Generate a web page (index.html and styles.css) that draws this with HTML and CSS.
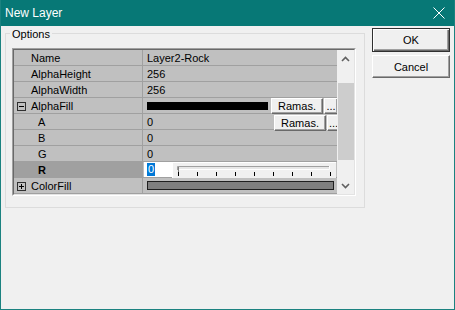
FILE: index.html
```html
<!DOCTYPE html>
<html lang="en">
<head>
  <meta charset="UTF-8">
  <title>New Layer</title>
  <link rel="stylesheet" href="styles.css">
</head>
<body>
  <div class="window">
    <!-- Barra de título -->
    <div class="titlebar">
      <span class="title">New Layer</span>
      <svg class="close" width="12" height="12" viewBox="0 0 12 12">
        <path d="M0.5 0.5L11.5 11.5M11.5 0.5L0.5 11.5" stroke="#fff" stroke-width="1" fill="none"/>
      </svg>
    </div>

    <div class="content">
      <!-- Grupo de opções -->
      <div class="group">
        <div class="group-title">Options</div>
        <div class="grid">
          <div class="grid-inner">
            <div class="props">
              <div class="row">
                <div class="name">Name</div>
                <div class="value">Layer2-Rock</div>
              </div>
              <div class="row">
                <div class="name">AlphaHeight</div>
                <div class="value">256</div>
              </div>
              <div class="row">
                <div class="name">AlphaWidth</div>
                <div class="value">256</div>
              </div>
              <div class="row">
                <div class="name exp"><span class="expander minus"></span>AlphaFill</div>
                <div class="value">
                  <span class="swatch"></span>
                  <button class="mini ramas">Ramas.</button>
                  <button class="mini dots">...</button>
                </div>
              </div>
              <div class="row">
                <div class="name sub">A</div>
                <div class="value">
                  <span class="val-text">0</span>
                  <button class="mini ramas low">Ramas.</button>
                  <button class="mini dots low">...</button>
                </div>
              </div>
              <div class="row">
                <div class="name sub">B</div>
                <div class="value">0</div>
              </div>
              <div class="row">
                <div class="name sub">G</div>
                <div class="value">0</div>
              </div>
              <div class="row selected">
                <div class="name sub"><b>R</b></div>
                <div class="value editing">
                  <span class="edit"><span class="sel">0</span></span>
                  <svg class="slider" width="164" height="16" viewBox="0 0 164 16">
                    <rect x="0" y="0" width="164" height="16" fill="#f0f0f0"/>
                    <path d="M0.5 0V16M0 0.5H164" stroke="#fff"/>
                    <rect x="5" y="4" width="153" height="4" fill="#e7e7e7"/>
                    <path d="M5.5 8V4.5H158" stroke="#a0a0a0" fill="none"/>
                    <path d="M6 7.5H157.5V4" stroke="#fff" fill="none"/>
                    <path d="M6.5 5V11" stroke="#808080"/>
                    <path d="M6.5 10V14M25.5 10V14M44.5 10V14M63.5 10V14M82.5 10V14M101.5 10V14M120.5 10V14M139.5 10V14M158.5 10V14" stroke="#000"/>
                  </svg>
                </div>
              </div>
              <div class="row">
                <div class="name exp"><span class="expander plus"></span>ColorFill</div>
                <div class="value"><span class="colorbar"></span></div>
              </div>
            </div>

            <!-- Barra de rolagem -->
            <div class="scrollbar">
              <div class="arrow">
                <svg width="9" height="6" viewBox="0 0 9 6"><path d="M1 5L4.5 1.5L8 5" stroke="#606060" stroke-width="1.6" fill="none"/></svg>
              </div>
              <div class="track"><div class="thumb"></div></div>
              <div class="arrow">
                <svg width="9" height="6" viewBox="0 0 9 6"><path d="M1 1L4.5 4.5L8 1" stroke="#606060" stroke-width="1.6" fill="none"/></svg>
              </div>
            </div>
          </div>
        </div>
      </div>

      <!-- Botões -->
      <div class="buttons">
        <button class="btn default">OK</button>
        <button class="btn">Cancel</button>
      </div>
    </div>
  </div>
</body>
</html>
```

FILE: styles.css
```css
* {
  box-sizing: border-box;
}
body {
  margin: 0;
  font-family: "Liberation Sans", Arial, sans-serif;
  font-size: 11px;
  color: #000;
}
.window {
  width: 455px;
  height: 310px;
  border: 1px solid #1b8280;
  border-top: 0;
  background: #f0f0f0;
  display: flex;
  flex-direction: column;
}
/* Barra de título */
.titlebar {
  height: 26px;
  flex: none;
  background: #077876;
  color: #fff;
  display: flex;
  align-items: center;
  padding: 0 9px 0 4px;
  font-size: 12px;
}
.title {
  flex: 1;
}
.content {
  display: flex;
  align-items: flex-start;
  gap: 7px;
  padding: 2px 0 0 4px;
}
/* Grupo */
.group {
  width: 360px;
  height: 175px;
  margin-top: 5px;
  border: 1px solid #dcdcdc;
  padding-left: 6px;
}
.group-title {
  width: fit-content;
  margin: -7px 0 0 -2px;
  padding: 0 2px;
  background: #f0f0f0;
  line-height: 14px;
}
.grid {
  width: 344px;
  height: 148px;
  margin-top: 7px;
  border: 1px solid;
  border-color: #a0a0a0 #fff #fff #a0a0a0;
}
.grid-inner {
  height: 100%;
  border: 1px solid;
  border-color: #696969 #e3e3e3 #e3e3e3 #696969;
  display: flex;
}
.props {
  width: 323px;
  background: #c0c0c0;
  overflow: hidden;
}
.row {
  height: 16px;
  display: flex;
  border-bottom: 1px solid #a0a0a0;
}
.name {
  width: 129px;
  flex: none;
  border-right: 1px solid #a0a0a0;
  padding-left: 17px;
  display: flex;
  align-items: center;
  white-space: nowrap;
}
.name.sub {
  padding-left: 24px;
}
.name.exp {
  padding-left: 3px;
}
.row.selected .name {
  background: #a0a0a0;
}
.expander {
  width: 9px;
  height: 9px;
  margin: 2px 5px 0 0;
  border: 1px solid #303030;
  position: relative;
}
.expander::before {
  content: "";
  position: absolute;
  left: 1px;
  top: 3px;
  width: 5px;
  height: 1px;
  background: #000;
}
.expander.plus::after {
  content: "";
  position: absolute;
  left: 3px;
  top: 1px;
  width: 1px;
  height: 5px;
  background: #000;
}
.value {
  flex: 1;
  display: flex;
  align-items: center;
  padding-left: 4px;
  white-space: nowrap;
}
.swatch {
  width: 121px;
  height: 8px;
  flex: none;
  background: #000;
}
.val-text {
  width: 127px;
  flex: none;
}
.mini {
  height: 16px;
  flex: none;
  padding: 0;
  font: 11px "Liberation Sans", Arial, sans-serif;
  color: #000;
  background: #f0f0f0;
  border: 1px solid;
  border-color: #fff #696969 #696969 #fff;
  box-shadow: inset -1px -1px 0 #a0a0a0;
}
.mini.ramas {
  width: 52px;
  margin-left: 3px;
}
.mini.dots {
  width: 14px;
  margin-left: 1px;
  line-height: 8px;
}
.mini.low {
  margin-top: 3px;
}
.mini.ramas.low {
  margin-left: 0;
}
.mini.dots.low {
  text-align: left;
  padding-left: 1px;
}
.value.editing {
  padding-left: 1px;
  align-items: stretch;
}
.edit {
  width: 28px;
  flex: none;
  background: #fff;
  padding: 1px 0 0 3px;
}
.sel {
  display: inline-block;
  background: #0078d7;
  color: #fff;
  padding: 0 1px;
  line-height: 13px;
}
.slider {
  flex: none;
}
.colorbar {
  width: 187px;
  height: 9px;
  flex: none;
  background: #808080;
  border: 1px solid #202020;
}
/* Barra de rolagem */
.scrollbar {
  width: 17px;
  background: #f0f0f0;
  display: flex;
  flex-direction: column;
}
.arrow {
  height: 17px;
  display: flex;
  align-items: center;
  justify-content: center;
}
.track {
  flex: 1;
}
.thumb {
  height: 77px;
  margin: 16px 0 0 1px;
  background: #cdcdcd;
}
/* Botões */
.buttons {
  width: 78px;
  display: flex;
  flex-direction: column;
  gap: 3px;
}
.btn {
  height: 23px;
  padding: 0;
  font: 11px "Liberation Sans", Arial, sans-serif;
  color: #000;
  background: #f0f0f0;
  border: 1px solid;
  border-color: #fff #696969 #696969 #fff;
  box-shadow: inset -1px -1px 0 #a0a0a0;
}
.btn.default {
  height: 24px;
  border: 1px solid #303030;
  box-shadow: inset 1px 1px 0 #fff, inset -1px -1px 0 #696969, inset -2px -2px 0 #a0a0a0;
}
```
